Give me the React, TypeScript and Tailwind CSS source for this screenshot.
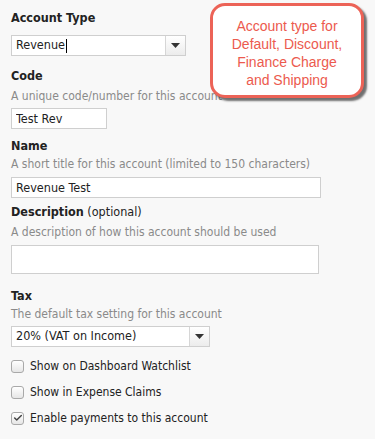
import { Check } from 'lucide-react'

const form = "font-['DejaVu_Sans_Condensed','DejaVu_Sans',sans-serif]"

function Label({ children, extra }: { children: string; extra?: string }) {
  return (
    <div className="text-[12.5px] leading-4 font-bold text-[#222]">
      {children}
      {extra && <span className="font-normal"> {extra}</span>}
    </div>
  )
}

function Help({ children, className = '' }: { children: string; className?: string }) {
  return <div className={`text-[12px] leading-4 text-[#8a8a8a] ${className}`}>{children}</div>
}

function Select({ value, width, caret }: { value: string; width: string; caret?: boolean }) {
  return (
    <div className={`flex h-[21px] border border-[#cfcfcf] bg-white ${width}`}>
      <div className="flex flex-1 items-center px-[4px] text-[12.5px] text-[#222]">
        {value}
        {caret && <span className="ml-[1px] inline-block h-[14px] w-px bg-black" />}
      </div>
      <div className="flex w-[20px] items-center justify-center border-l border-[#d6d6d6] bg-gradient-to-b from-white to-[#ececec]">
        <svg width="9" height="5" viewBox="0 0 9 5"><path d="M0 0h9L4.5 5z" fill="#333" /></svg>
      </div>
    </div>
  )
}

function Box({ checked, label }: { checked?: boolean; label: string }) {
  return (
    <div className="flex h-4 items-center gap-[6px] text-[12px] text-[#222]">
      <div className="flex h-[13px] w-[13px] items-center justify-center rounded-[3px] border border-[#a9a9a9] bg-gradient-to-b from-white to-[#e6e6e6]">
        {checked && <Check size={10} strokeWidth={3.5} className="text-[#444]" />}
      </div>
      {label}
    </div>
  )
}

export default function App() {
  return (
    <div className={`relative h-[439px] w-[375px] overflow-hidden bg-[#f8f8f8] ${form}`}>
      <div className="flex flex-col px-[11px] pt-[10px]">
        <Label>Account Type</Label>
        <div className="mt-[9px]">
          <Select value="Revenue" width="w-[175px]" caret />
        </div>

        <div className="mt-[12px]"><Label>Code</Label></div>
        <Help className="mt-[4px]">A unique code/number for this account</Help>
        <input
          readOnly
          value="Test Rev"
          className="mt-[4px] h-[21px] w-[96px] border border-[#cfcfcf] bg-white px-[4px] text-[12.5px] text-[#222] outline-none"
        />

        <div className="mt-[9px]"><Label>Name</Label></div>
        <Help className="mt-[2px]">A short title for this account (limited to 150 characters)</Help>
        <input
          readOnly
          value="Revenue Test"
          className="mt-[5px] h-[21px] w-[310px] border border-[#cfcfcf] bg-white px-[4px] text-[12.5px] text-[#222] outline-none"
        />

        <div className="mt-[6px]"><Label extra="(optional)">Description</Label></div>
        <Help className="mt-[4px]">A description of how this account should be used</Help>
        <div className="mt-[5px] h-[29px] w-[308px] border border-[#cfcfcf] bg-white" />

        <div className="mt-[14px]"><Label>Tax</Label></div>
        <Help className="mt-[2px]">The default tax setting for this account</Help>
        <div className="mt-[4px]">
          <Select value="20% (VAT on Income)" width="w-[199px]" />
        </div>

        <div className="mt-[11px] flex flex-col gap-[10px]">
          <Box label="Show on Dashboard Watchlist" />
          <Box label="Show in Expense Claims" />
          <Box checked label="Enable payments to this account" />
        </div>
      </div>

      <div className="absolute left-[210px] top-[3px] flex h-[95px] w-[154px] justify-center rounded-[15px] border-[3px] border-[#ec6357] bg-white pt-[11px] shadow-[3px_3px_2px_rgba(0,0,0,0.55)]">
        <p className="text-center font-['Liberation_Sans',Arial,sans-serif] text-[14px] leading-[18px] text-[#ec5a4e]">
          Account type for<br />Default, Discount,<br />Finance Charge<br />and Shipping
        </p>
      </div>
    </div>
  )
}
